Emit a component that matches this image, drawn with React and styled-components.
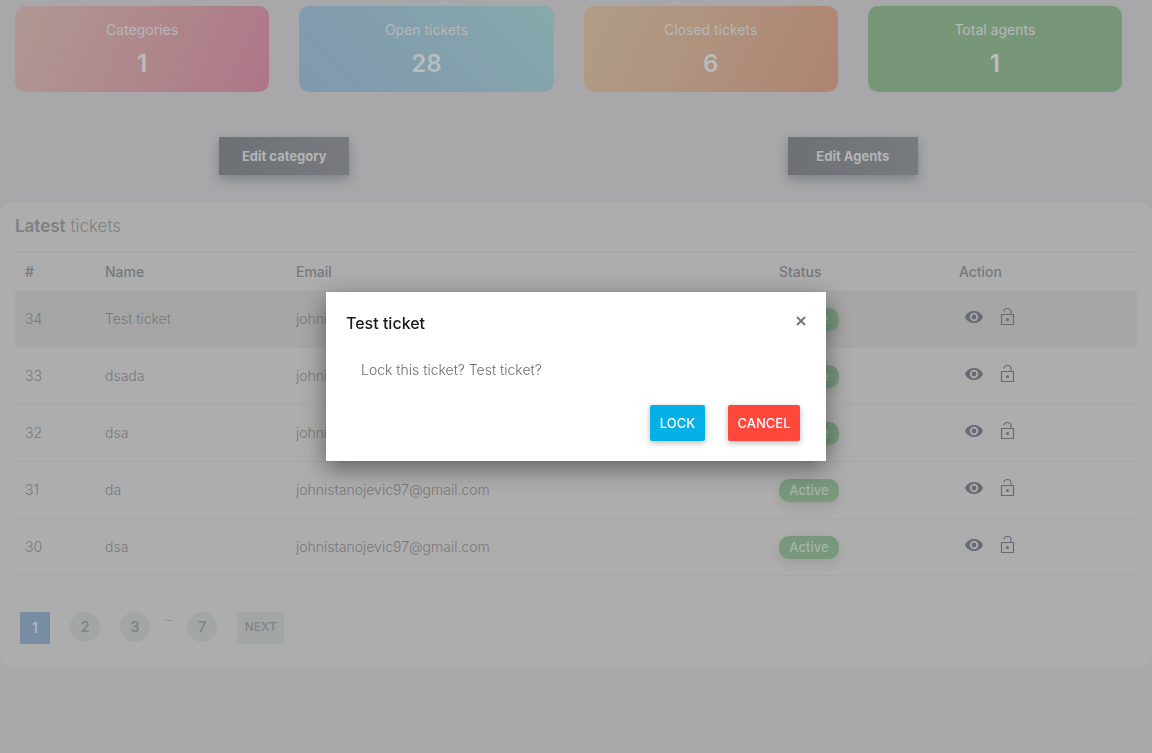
import React from "react";
import styled, { createGlobalStyle } from "styled-components";

const GlobalStyle = createGlobalStyle`
  *, *::before, *::after { box-sizing: border-box; }
  body {
    margin: 0;
    background: #a8a8ab;
    color: #78787a;
    font-family: Inter, "Open Sans", sans-serif;
    font-size: 14px;
    line-height: 20px;
  }
  button { font-family: inherit; cursor: pointer; }
  h1, h2, p { margin: 0; }
`;

const Page = styled.main`
  display: flex;
  flex-direction: column;
`;

const Stats = styled.section`
  display: grid;
  grid-template-columns: repeat(4, 1fr);
  gap: 30px;
  padding: 6px 30px 0 15px;
`;

const StatCard = styled.article`
  height: 86px;
  padding: 14px;
  border-radius: 10px;
  background: ${(p) => p.$fill};
  color: #b6b7b8;
  text-align: center;
`;

const StatValue = styled.p`
  margin-top: 8px;
  color: #bbbcbd;
  font-size: 24px;
  font-weight: 600;
  line-height: 32px;
`;

const EditActions = styled.section`
  display: grid;
  grid-template-columns: repeat(2, 1fr);
  justify-items: center;
  padding: 45px 15px 27px 0;
`;

const EditButton = styled.button`
  width: 130px;
  height: 38px;
  padding: 0;
  border: 0;
  background: linear-gradient(90deg, #6d7175, #777b80);
  box-shadow: 0 5px 12px rgba(76, 82, 88, 0.45);
  color: #b3b5b7;
  font-size: 13px;
  font-weight: 700;
`;

const Panel = styled.section`
  padding: 12px 15px 23px;
  border-radius: 12px;
  background: #adadad;
`;

const PanelTitle = styled.h1`
  padding-bottom: 12px;
  color: #7f8083;
  font-size: 17px;
  font-weight: 300;
  line-height: 25px;
  strong { font-weight: 600; }
`;

const Table = styled.table`
  width: 100%;
  border-collapse: separate;
  border-spacing: 0;
  table-layout: fixed;
`;

const HeadCell = styled.th`
  width: ${(p) => p.$width};
  height: 40px;
  padding: 0 10px;
  border-top: 1px solid #a4a4a4;
  color: #77787a;
  font-weight: 500;
  text-align: left;
`;

const Row = styled.tr`
  background: ${(p) => (p.$active ? "#a6a6a6" : "transparent")};
`;

const Cell = styled.td`
  height: 57px;
  padding: 0 10px;
  border-bottom: 1px solid #a7a7a7;
  font-weight: 300;
`;

const Badge = styled.span`
  display: inline-block;
  width: 60px;
  border-radius: 10px;
  background: #78987c;
  box-shadow: 0 4px 8px rgba(110, 114, 111, 0.25);
  color: #a8b3aa;
  font-size: 13px;
  font-weight: 500;
  line-height: 23px;
  text-align: center;
`;

const RowActions = styled.div`
  display: flex;
  align-items: center;
  gap: 13px;
  padding: 0 0 5px 5px;
`;

const IconButton = styled.button`
  display: flex;
  padding: 0;
  border: 0;
  background: none;
  color: #686b73;
`;

const Pagination = styled.nav`
  display: flex;
  align-items: flex-start;
  gap: 20px;
  padding: 36px 5px 0;
`;

const PageButton = styled.button`
  width: 30px;
  height: ${(p) => (p.$current ? "32px" : "30px")};
  padding: 0 0 2px;
  border: 0;
  border-radius: ${(p) => (p.$current ? "0" : "50%")};
  background: ${(p) => (p.$current ? "#788da3" : "#a2a6a5")};
  color: ${(p) => (p.$current ? "#b2b6bb" : "#818486")};
  font-size: 14px;
  font-weight: 600;
`;

const NextButton = styled(PageButton)`
  width: 47px;
  height: 32px;
  padding-bottom: 4px;
  border-radius: 0;
  font-size: 12px;
  font-weight: 500;
`;

const Dots = styled.span`
  margin: 0 -5px;
  font-size: 8px;
  font-weight: 500;
  line-height: 12px;
`;

const Overlay = styled.div`
  position: fixed;
  inset: 0;
  display: flex;
  align-items: center;
  justify-content: center;
`;

const Dialog = styled.div`
  width: 500px;
  max-width: 100%;
  padding: 19px 20px 20px;
  background: #fff;
  box-shadow: 0 7px 22px rgba(0, 0, 0, 0.45);
`;

const DialogHeader = styled.header`
  display: flex;
  justify-content: space-between;
  align-items: center;
`;

const DialogTitle = styled.h2`
  color: #17191c;
  font-size: 16px;
  font-weight: 500;
  line-height: 24px;
`;

const CloseButton = styled.button`
  display: flex;
  padding: 0 0 4px;
  border: 0;
  background: none;
  color: #777;
`;

const DialogText = styled.p`
  padding: 25px 15px;
  color: #6c6c6c;
  font-weight: 300;
`;

const DialogActions = styled.footer`
  display: flex;
  justify-content: flex-end;
  gap: 23px;
  padding-right: 6px;
`;

const DialogButton = styled.button`
  width: ${(p) => p.$width};
  height: 36px;
  padding: 0;
  border: 0;
  border-radius: 2px;
  background: ${(p) => p.$fill};
  box-shadow: 0 2px 6px rgba(0, 0, 0, 0.28);
  color: #fff;
  font-size: 13px;
  font-weight: 500;
`;

const EyeIcon = () => (
  <svg width="20" height="20" viewBox="0 0 20 20" aria-hidden="true">
    <path
      fill="currentColor"
      fillRule="evenodd"
      d="M10 4C5.8 4 2.3 6.5 1 10c1.3 3.500 4.800 6 9 6s7.700-2.500 9-6c-1.300-3.500-4.800-6-9-6Zm0 10.200a4.200 4.200 0 1 1 0-8.400 4.200 4.200 0 0 1 0 8.400Zm0-1.800a2.400 2.400 0 1 0 0-4.800 2.400 2.400 0 0 0 0 4.800Z"
    />
  </svg>
);

const UnlockIcon = () => (
  <svg width="20" height="20" viewBox="0 0 20 20" fill="none" stroke="currentColor" aria-hidden="true">
    <path d="M4.500 7.500h12v10h-12z" strokeWidth="1.200" />
    <path d="M7 4.500C7 2.800 8.500 1.500 10.500 1.500S14 2.800 14 4.500v3" strokeWidth="1.200" />
    <circle cx="10.500" cy="12.500" r="1.500" fill="currentColor" stroke="none" />
  </svg>
);

const CloseIcon = () => (
  <svg width="10" height="10" viewBox="0 0 10 10" stroke="currentColor" strokeWidth="2" aria-hidden="true">
    <path d="M1 1l8 8M9 1L1 9" />
  </svg>
);

const stats = [
  { label: "Categories", value: 1, fill: "linear-gradient(115deg, #b09894, #ae868b 55%, #ae7689)" },
  { label: "Open tickets", value: 28, fill: "linear-gradient(45deg, #8099af, #839fad 50%, #87a9ac)" },
  { label: "Closed tickets", value: 6, fill: "linear-gradient(115deg, #b09d87, #ae8f7b 60%, #ae8371)" },
  { label: "Total agents", value: 1, fill: "#789779" },
];

const columns = [
  ["#", "7.13%"],
  ["Name", "17.02%"],
  ["Email", "43.05%"],
  ["Status", "16.04%"],
  ["Action", "16.76%"],
];

const tickets = [
  [34, "Test ticket"],
  [33, "dsada"],
  [32, "dsa"],
  [31, "da"],
  [30, "dsa"],
];

export default function App() {
  return (
    <>
      <GlobalStyle />
      <Page>
        <Stats>
          {stats.map((s) => (
            <StatCard key={s.label} $fill={s.fill}>
              <p>{s.label}</p>
              <StatValue>{s.value}</StatValue>
            </StatCard>
          ))}
        </Stats>
        <EditActions>
          <EditButton>Edit category</EditButton>
          <EditButton>Edit Agents</EditButton>
        </EditActions>
        <Panel>
          <PanelTitle>
            <strong>Latest</strong> tickets
          </PanelTitle>
          <Table>
            <thead>
              <tr>
                {columns.map(([name, width]) => (
                  <HeadCell key={name} $width={width}>{name}</HeadCell>
                ))}
              </tr>
            </thead>
            <tbody>
              {tickets.map(([id, name], i) => (
                <Row key={id} $active={i === 0}>
                  <Cell>{id}</Cell>
                  <Cell>{name}</Cell>
                  <Cell>johnistanojevic97@gmail.com</Cell>
                  <Cell><Badge>Active</Badge></Cell>
                  <Cell>
                    <RowActions>
                      <IconButton aria-label="View ticket"><EyeIcon /></IconButton>
                      <IconButton aria-label="Lock ticket"><UnlockIcon /></IconButton>
                    </RowActions>
                  </Cell>
                </Row>
              ))}
            </tbody>
          </Table>
          <Pagination aria-label="Pages">
            <PageButton $current>1</PageButton>
            <PageButton>2</PageButton>
            <PageButton>3</PageButton>
            <Dots>...</Dots>
            <PageButton>7</PageButton>
            <NextButton>NEXT</NextButton>
          </Pagination>
        </Panel>
      </Page>
      <Overlay>
        <Dialog role="dialog" aria-modal="true" aria-labelledby="dialog-title">
          <DialogHeader>
            <DialogTitle id="dialog-title">Test ticket</DialogTitle>
            <CloseButton aria-label="Close"><CloseIcon /></CloseButton>
          </DialogHeader>
          <DialogText>Lock this ticket? Test ticket?</DialogText>
          <DialogActions>
            <DialogButton $width="55px" $fill="#03b0e8">LOCK</DialogButton>
            <DialogButton $width="72px" $fill="#ff483b">CANCEL</DialogButton>
          </DialogActions>
        </Dialog>
      </Overlay>
    </>
  );
}
